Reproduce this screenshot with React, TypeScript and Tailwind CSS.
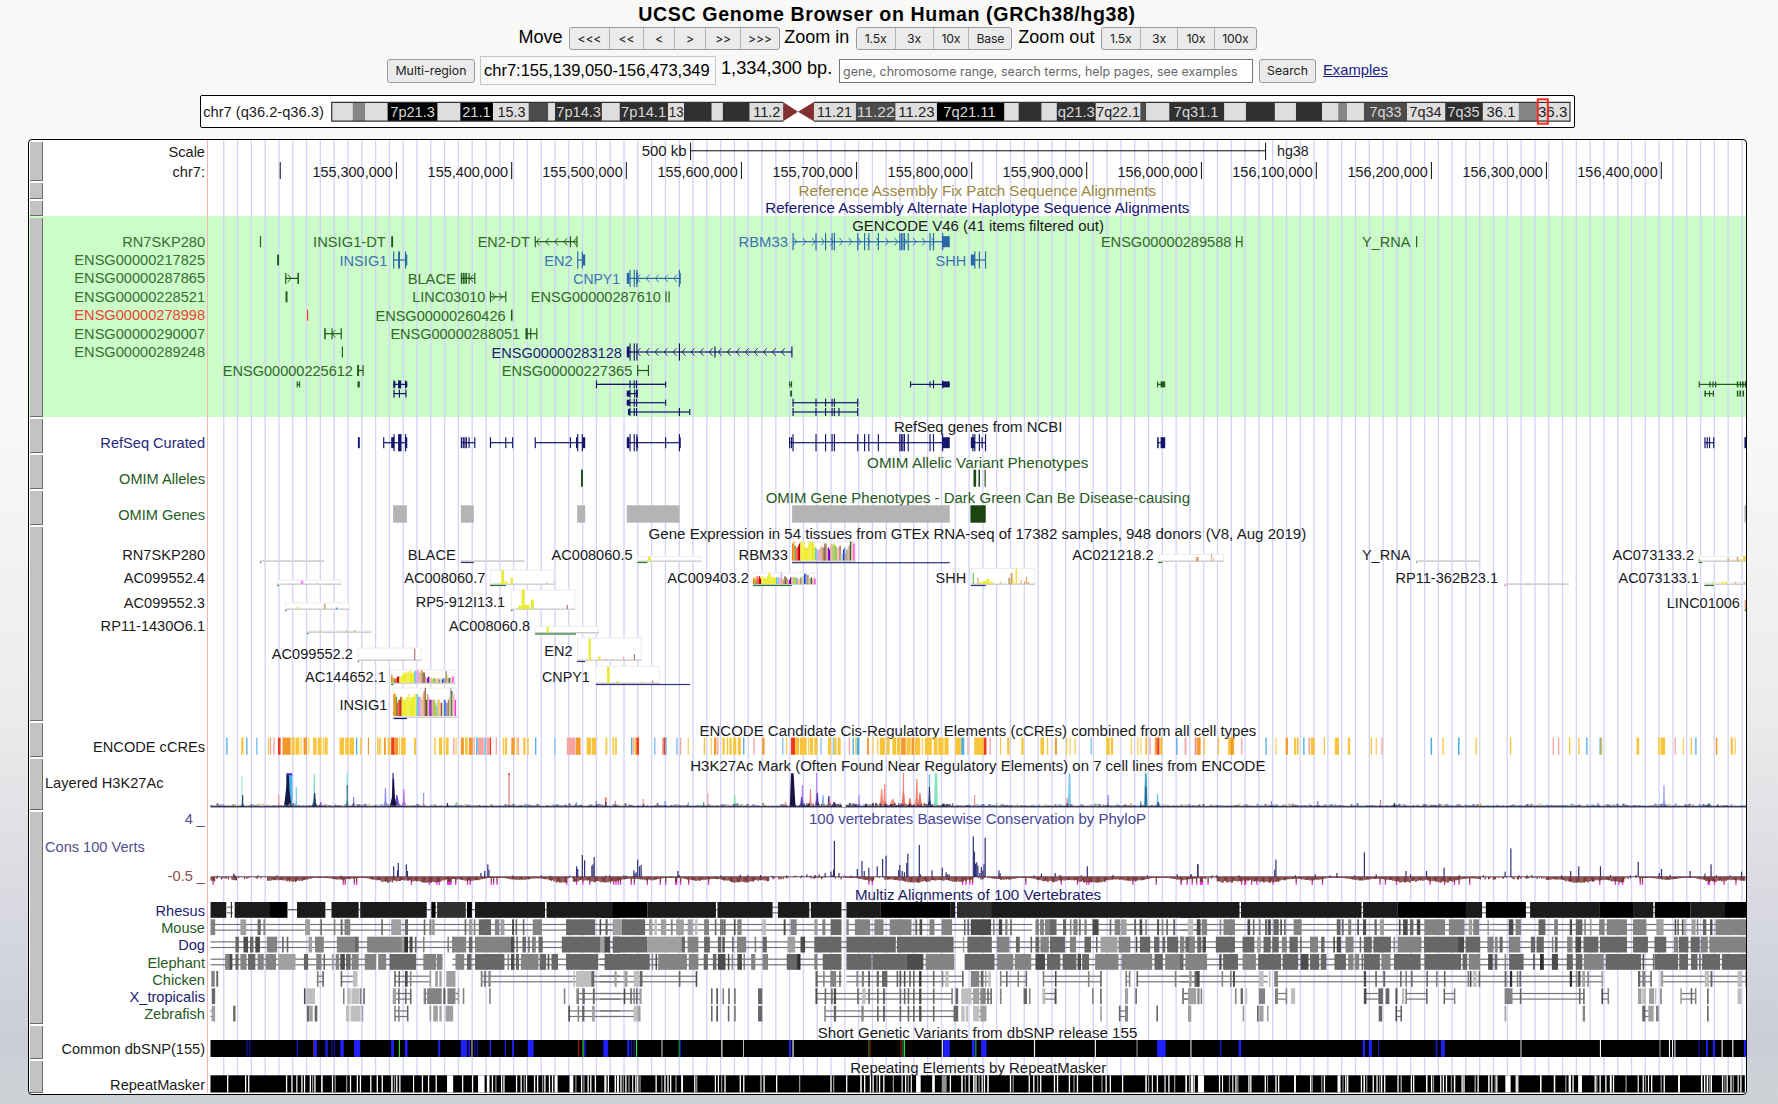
import React from "react";

/* Positions inside the tracks are stored per tile: [page origin, units per pixel]. */
const TILES: [number, number][] = [
  [20, 2.6133],
  [600, 2.6133],
  [1180, 2.6221],
];
const px = (t: number, v: number) => TILES[t][0] + v / TILES[t][1];

type Span = { x: number; w: number; k: string };

/* Parses "12-20a 33b": a range or a single position, then a one-letter colour key. */
function spans(parts: string[], thin = 1.3): Span[] {
  const out: Span[] = [];
  parts.forEach((s, t) => {
    s.split(/\s+/).forEach((tok) => {
      const m = /^(\d+)(?:-(\d+))?([a-z])?$/.exec(tok);
      if (!m) return;
      const x = px(t, +m[1]);
      const w = m[2] ? px(t, +m[2]) - x : thin;
      out.push({ x, w, k: m[3] || "" });
    });
  });
  return out;
}

function rng(seed: number) {
  let s = seed;
  return () => {
    s = (s * 1664525 + 1013904223) % 4294967296;
    return s / 4294967296;
  };
}

const NAVY = "#14146a";
const BLUE = "#2a66a8";
const GREEN = "#1d5a18";
const FONT = "'Liberation Sans', Arial, sans-serif";

function T({ x, e, y, c = "#1a1a1a", s = 15.3, children }: { x: number; e: number; y: number; c?: string; s?: number; children: string }) {
  return (
    <text x={x} y={y} fill={c} fontSize={s} fontFamily={FONT} textLength={e - x} lengthAdjust="spacingAndGlyphs">
      {children}
    </text>
  );
}

/* ---------- Track frame ---------- */

type Label = { t: string; y: number; c?: string; left?: boolean };

function Track({ y, h, labels = [], green = false, children }: { y: number; h: number; labels?: Label[]; green?: boolean; children?: React.ReactNode }) {
  let bottom = y;
  return (
    <div className={green ? "flex bg-[#ccfcc8]" : "flex"} style={{ height: h }}>
      <button className="ml-px mt-[1.5px] mb-[0.5px] w-[13px] shrink-0 border-r border-b border-[#6c6c6c] bg-[#c3c3c3]" aria-label="Configure track" />
      <div className="flex w-[164px] shrink-0 flex-col pl-[2px] pr-[2px] text-[14.6px] leading-4 whitespace-pre">
        {labels.map((l) => {
          const mt = l.y - 8 - bottom;
          bottom = l.y + 8;
          return (
            <div key={l.t} className={l.left ? "text-left" : "text-right"} style={{ marginTop: mt, color: l.c || "#1a1a1a", height: 16 }}>
              {l.t}
            </div>
          );
        })}
      </div>
      <svg className="block shrink-0" width={1539} height={h} viewBox={`207 ${y} 1539 ${h}`}>
        <rect x={207} y={y} width={1} height={h} fill="#f3b3b0" />
        {Array.from({ length: 111 }, (_, i) => (
          <rect key={i} x={223.1 + i * 13.802} y={y} width={1.3} height={h} fill="#d2d2fa" />
        ))}
        {children}
      </svg>
    </div>
  );
}

/* ---------- Genes ---------- */

type GeneProps = { t: number; y: number; c: string; line?: [number, number]; tall?: string; low?: string; arrows?: [number, number, number]; dir?: 1 | -1; hh?: number; lh?: number };

function Gene({ t, y, c, line, tall = "", low = "", arrows, dir = 1, hh = 8.6, lh = 5.5 }: GeneProps) {
  const pad = (s: string) => TILES.map((_, i) => (i === t ? s : ""));
  const a: number[] = [];
  if (arrows) for (let v = arrows[0]; v <= arrows[1]; v += arrows[2]) a.push(px(t, v));
  return (
    <g fill={c}>
      {line && <rect x={px(t, line[0])} y={y - 0.6} width={px(t, line[1]) - px(t, line[0])} height={1.2} />}
      {spans(pad(tall), 1.15).map((s, i) => (
        <rect key={i} x={s.x} y={y - hh} width={s.w} height={hh * 2} />
      ))}
      {spans(pad(low), 1.15).map((s, i) => (
        <rect key={"l" + i} x={s.x} y={y - lh} width={s.w} height={lh * 2} />
      ))}
      {a.map((x, i) => (
        <path key={"a" + i} d={`M${x - 1.6 * dir} ${y - 3.8}L${x + 1.6 * dir} ${y}L${x - 1.6 * dir} ${y + 3.8}`} fill="none" stroke={c} strokeWidth={0.9} />
      ))}
    </g>
  );
}

const R = [241.7, 260, 278.4, 296.8, 315.2, 333.7, 352, 370.5];
const P = [384.4, 393.6, 402.7, 412];

const TEXT_TINT: Record<string, string> = { [GREEN]: "#2c6a26", [BLUE]: "#3a74b0", [NAVY]: "#1c1c74" };
const GENE_NAMES: [string, number, number, number, number, string][] = [
  ["INSIG1-DT", 0, 766, 956, 0, GREEN],
  ["EN2-DT", 0, 1196, 1332, 0, GREEN],
  ["RBM33", 1, 362, 491, 0, BLUE],
  ["ENSG00000289588", 1, 1309, 1650, 0, GREEN],
  ["Y_RNA", 2, 477, 604, 0, GREEN],
  ["INSIG1", 0, 835, 960, 1, BLUE],
  ["EN2", 0, 1370, 1444, 1, BLUE],
  ["SHH", 1, 877, 957, 1, BLUE],
  ["BLACE", 0, 1013, 1139, 2, GREEN],
  ["CNPY1", 0, 1446, 1568, 2, BLUE],
  ["LINC03010", 0, 1025, 1216, 3, GREEN],
  ["ENSG00000287610", 0, 1335, 1675, 3, GREEN],
  ["ENSG00000260426", 0, 929, 1269, 4, GREEN],
  ["ENSG00000288051", 0, 968, 1307, 5, GREEN],
  ["ENSG00000283128", 0, 1232, 1573, 6, NAVY],
  ["ENSG00000225612", 0, 530, 870, 7, GREEN],
  ["ENSG00000227365", 0, 1259, 1600, 7, GREEN],
];

function Gencode() {
  const s = { hh: 4, lh: 3 };
  return (
    <>
      <T x={852.2} e={1104} y={231}>GENCODE V46 (41 items filtered out)</T>
      {GENE_NAMES.map(([n, t, a, b, r, c]) => (
        <T key={n} x={px(t, a)} e={px(t, b)} y={R[r] + 5.5} c={TEXT_TINT[c]}>{n}</T>
      ))}
      <Gene t={0} y={R[0]} c={GREEN} low="627 970-975" />
      <Gene t={0} y={R[0]} c={GREEN} line={[1346, 1456]} low="1345 1437 1454" arrows={[1354, 1450, 24]} dir={-1} />
      <Gene t={1} y={R[0]} c={BLUE} line={[504, 900]} tall="503 563 588 605 611 672 690 701 726 782 786 790 794 804 861 870 894" low="894-914" arrows={[510, 870, 24]} />
      <Gene t={2} y={R[0]} c={GREEN} line={[148, 162]} low="147 161 619" />
      <Gene t={0} y={R[1]} c={GREEN} low="672-677" />
      <Gene t={0} y={R[1]} c={BLUE} line={[976, 1010]} tall="975 988-993 1006" low="1006-1012" />
      <Gene t={0} y={R[1]} c={BLUE} line={[1457, 1475]} tall="1456 1468" low="1470-1477" />
      <Gene t={1} y={R[1]} c={BLUE} line={[970, 1008]} tall="978 990 1006" low="969-979" />
      <Gene t={0} y={R[2]} c={GREEN} line={[694, 728]} low="693 725-729" arrows={[704, 706, 8]} />
      <Gene t={0} y={R[2]} c={GREEN} line={[1153, 1188]} low="1152-1156 1158-1162 1164-1168 1172 1187" arrows={[1180, 1184, 8]} dir={-1} />
      <Gene t={1} y={R[2]} c={BLUE} line={[70, 210]} tall="77 88 95 206" low="70-77 95-99 208" arrows={[101, 200, 24]} dir={-1} />
      <Gene t={0} y={R[3]} c={GREEN} low="694-699" />
      <Gene t={0} y={R[3]} c={GREEN} line={[1229, 1269]} low="1228 1268" arrows={[1238, 1262, 18]} />
      <Gene t={1} y={R[3]} c={GREEN} low="171 179" />
      <Gene t={0} y={R[4]} c="#ef3b2c" low="750" />
      <Gene t={0} y={R[4]} c={GREEN} low="1283-1287" />
      <Gene t={0} y={R[5]} c={GREEN} line={[796, 839]} low="795-799 814 838" arrows={[820, 824, 8]} dir={-1} />
      <Gene t={0} y={R[5]} c={GREEN} line={[1322, 1350]} low="1321-1327 1333 1349" />
      <Gene t={0} y={R[6]} c={GREEN} low="841" />
      <Gene t={1} y={R[6]} c={NAVY} line={[70, 502]} tall="77 88 95 206" low="70-77 299 500" arrows={[101, 490, 23.6]} dir={-1} />
      <Gene t={0} y={R[7]} c={GREEN} line={[882, 897]} low="881-886 895" />
      <Gene t={1} y={R[7]} c={GREEN} line={[97, 126]} low="97 125" />
      <Gene t={0} y={P[0]} c={GREEN} line={[724, 731]} low="723-726 729-732 882-888" {...s} />
      <Gene t={0} y={P[0]} c={NAVY} line={[976, 1012]} tall="976 988-996 1006-1009" low="976-981 1008-1012" {...s} />
      <Gene t={0} y={P[1]} c={NAVY} line={[976, 1009]} tall="976 990 1007" {...s} />
      <Gene t={0} y={P[0]} c={NAVY} line={[1506, 1686]} tall="1505" {...s} />
      <Gene t={1} y={P[0]} c={NAVY} line={[0, 171]} tall="77 88 94" low="170" {...s} />
      <Gene t={1} y={P[1]} c={NAVY} line={[70, 99]} tall="77 89 94-99" low="70-78" {...s} />
      <Gene t={1} y={P[2]} c={NAVY} line={[70, 171]} tall="77 88 94" low="70-78 170" {...s} />
      <Gene t={1} y={P[3]} c={NAVY} line={[74, 235]} tall="77 88 94 206" low="73-78 233" {...s} />
      <Gene t={1} y={P[0]} c={GREEN} line={[495, 501]} low="494 499" {...s} />
      <Gene t={1} y={P[1]} c={GREEN} low="497-502" {...s} />
      <Gene t={1} y={P[2]} c={NAVY} line={[504, 673]} tall="503 563 588 605 611 672" {...s} />
      <Gene t={1} y={P[3]} c={NAVY} line={[504, 673]} tall="503 563 588 605 611 623 672" {...s} />
      <Gene t={1} y={P[0]} c={NAVY} line={[811, 914]} tall="870 894" low="810 861 894-914" {...s} />
      <Gene t={1} y={P[0]} c={GREEN} line={[1457, 1476]} low="1456 1465-1477" {...s} />
      <Gene t={2} y={P[0]} c={GREEN} line={[1361, 1484]} low="1360 1388 1396 1403 1460-1464 1468-1471 1474-1478 1481-1485" {...s} />
      <Gene t={2} y={P[1]} c={GREEN} line={[1376, 1398]} low="1375-1379 1387 1397 1460-1464 1467-1471 1475-1479" {...s} />
    </>
  );
}

/* ---------- GTEx ---------- */

const TISSUES = "#ff6600 #ffaa00 #33aa33 #ff5555 #dd6655 #ff0000 #aa0000 #eded30 #eded30 #eded30 #eded30 #eded30 #eded30 #eded30 #eded30 #eded30 #eded30 #eded30 #eded30 #eded30 #33cccc #88bbee #ee88ff #f0b8b0 #ccaadd #eebb77 #cc9955 #8b7355 #6a4420 #bb9988 #e8b8a8 #9900ff #660099 #d8b090 #e0b090 #aabb66 #99ee22 #99bb88 #aaaaff #ffd700 #ffaaff #995522 #aaff99 #d8c8c0 #1144ff #5577ff #cc9977 #778855 #f0c890 #cc9999 #117733 #eebbaa #ffbbbb #ff33dd".split(" ");

const DENSE: { t: number; x: number; base: number; h: number; v: string }[] = [
  { t: 0, x: 976, base: 716, h: 28, v: "776455665556675666777666578957655555435544355445698775566555667555756665565566" },
  { t: 0, x: 970, base: 682.7, h: 13, v: "533234444576777887678899789774334332332332232338533344347435663333773323333" },
  { t: 1, x: 502, base: 560.5, h: 19, v: "897667899796668999866555676688665887876667335635679998856657779777967788776655" },
  { t: 1, x: 400, base: 584, h: 11.5, v: "4536464655446896555555549436543355555543456688775453546776535887778643" },
];

type Box = { t: number; x: number; top: number; base: number; g: [number, number, string] | null; bars?: [number, number, string, number?][] };
const G = "#2b7a2b";
const N = "#30307c";
const Y = "#eaea38";
const BOXES: Box[] = [
  { t: 0, x: 628, top: 560.5, base: 561, g: [627, 630, G] },
  { t: 0, x: 673, top: 580, base: 584, g: [672, 676, G], bars: [[734, 10, "#ee88ff", 6], [775, 4, "#e8a090"]] },
  { t: 0, x: 694, top: 603, base: 609, g: [693, 697, G], bars: [[723, 5, "#eedd55", 6], [794, 16, "#d8b090", 5], [825, 4, "#4488ff", 5]] },
  { t: 0, x: 751, top: 631, base: 632, g: [750, 754, G], bars: [[783, 4, "#eedd55", 5], [852, 4, "#ddb050"], [873, 5, "#ddb050"]] },
  { t: 0, x: 883, top: 648, base: 660, g: [883, 886, G], bars: [[1030, 34, "#b07070"]] },
  { t: 0, x: 970, top: 670, base: 683, g: [970, 976, G] },
  { t: 0, x: 976, top: 688, base: 717, g: [976, 1011, NAVY] },
  { t: 0, x: 1152, top: 560.5, base: 561, g: [1152, 1186, N] },
  { t: 0, x: 1229, top: 570, base: 584, g: [1228, 1270, G], bars: [[1258, 42, Y, 7], [1252, 6, Y], [1266, 8, Y, 8], [1282, 19, Y, 6], [1375, 4, "#e0a0a0"]] },
  { t: 0, x: 1284, top: 590, base: 609, g: [1283, 1287, G], bars: [[1302, 10, Y, 10], [1311, 58, Y, 8], [1319, 13, Y, 12], [1335, 28, Y, 8], [1429, 12, "#b07070"]] },
  { t: 0, x: 1346, top: 626.5, base: 632.5, g: [1346, 1453, G], bars: [[1376, 17, Y, 6]] },
  { t: 0, x: 1457, top: 638, base: 660, g: [1456, 1477, N], bars: [[1486, 64, Y, 6], [1511, 11, Y, 6], [1530, 4, "#f0a0a0"], [1547, 4, "#f0a0a0"], [1576, 10, "#f0a0a0"], [1604, 18, "#b07070"]] },
  { t: 0, x: 1505, top: 666.5, base: 683, g: [1505, 1751, N], bars: [[1534, 48, Y, 7], [1558, 6, Y, 6], [1624, 5, "#dddd66"], [1652, 8, "#c08080"]] },
  { t: 1, x: 98, top: 556.5, base: 561, g: [97, 124, G], bars: [[125, 13, Y, 8]] },
  { t: 1, x: 502, top: 542, base: 561.2, g: [502, 914, N] },
  { t: 1, x: 400, top: 573, base: 584, g: [400, 502, G] },
  { t: 1, x: 970, top: 568.5, base: 584, g: [969, 1008, N], bars: [[974, 34, "#55cc55"], [986, 20, "#d8a878"], [991, 5, Y, 7], [999, 9, Y, 10], [1010, 15, Y, 8], [1019, 6, Y, 8], [1046, 8, "#e8c090"], [1067, 18, "#c8a070", 5], [1073, 33, "#c8a070", 5], [1078, 18, Y], [1086, 46, "#f8d840", 4], [1099, 12, "#e8b090"], [1108, 8, "#e0a060"], [1113, 22, "#e0a060"], [1118, 6, "#e0a060"]] },
  { t: 1, x: 1459, top: 554.5, base: 561, g: [1458, 1470, G], bars: [[1464, 12, "#88dd88", 5], [1558, 12, "#d8a070", 6]] },
  { t: 2, x: -53, top: 554.5, base: 561, g: null, bars: [[42, 12, "#d8a070", 7], [81, 21, "#e0b090"], [86, 8, "#f0d0b0", 5]] },
  { t: 2, x: 619, top: 560.5, base: 561, g: [619, 621, G] },
  { t: 2, x: 852, top: 583.5, base: 584, g: [850, 855, "#ee77ee"] },
  { t: 2, x: 1360, top: 556.5, base: 561, g: [1360, 1369, G], bars: [[1360, 6, "#f0a060"], [1435, 10, "#e0b080", 5], [1450, 4, "#ddaa66"], [1460, 12, "#d8a070", 4], [1468, 6, Y, 6], [1477, 15, "#eecc33", 6]] },
  { t: 2, x: 1376, top: 582, base: 584, g: [1375, 1400, G], bars: [[1396, 6, Y], [1420, 6, Y, 5], [1429, 6, Y, 5], [1454, 6, "#ddaa66"], [1478, 6, "#ddaa66"]] },
];

const GTEX_NAMES: [string, number, number, number, number][] = [
  ["BLACE", 0, 1013, 1139, 559.9],
  ["AC008060.5", 0, 1389, 1601, 559.9],
  ["RBM33", 1, 362, 491, 559.9],
  ["AC021218.2", 1, 1234, 1447, 559.9],
  ["Y_RNA", 2, 477, 604, 559.9],
  ["AC073133.2", 2, 1134, 1348, 559.9],
  ["AC008060.7", 0, 1004, 1216, 583.2],
  ["AC009403.2", 1, 176, 389, 583.2],
  ["SHH", 1, 877, 957, 583.2],
  ["RP11-362B23.1", 2, 565, 834, 583.2],
  ["AC073133.1", 2, 1150, 1360, 583.2],
  ["RP5-912I13.1", 0, 1034, 1268, 607.2],
  ["LINC01006", 2, 1276, 1468, 608.2],
  ["AC008060.8", 0, 1121, 1333, 631.4],
  ["AC099552.2", 0, 658, 870, 658.8],
  ["EN2", 0, 1370, 1444, 656.4],
  ["AC144652.1", 0, 745, 956, 681.8],
  ["CNPY1", 0, 1364, 1489, 681.8],
  ["INSIG1", 0, 835, 960, 710.3],
];

function Gtex() {
  return (
    <>
      <T x={648.6} e={1306.2} y={539}>Gene Expression in 54 tissues from GTEx RNA-seq of 17382 samples, 948 donors (V8, Aug 2019)</T>
      {GTEX_NAMES.map(([n, t, a, b, y]) => (
        <T key={n} x={px(t, a)} e={px(t, b)} y={y}>{n}</T>
      ))}
      {BOXES.map((b, i) => {
        const x = px(b.t, b.x);
        return (
          <g key={i}>
            <rect x={x} y={b.top} width={63.5} height={b.base - b.top + 0.5} fill="#fff" stroke="#ececec" strokeWidth={1} />
            <rect x={x} y={b.base - 0.5} width={63.8} height={1.3} fill="#cbcbcb" />
            {b.bars?.map(([v, h, c, w], j) => (
              <rect key={j} x={px(b.t, v)} y={b.base - h / 3} width={(w || 3) / 2.6} height={h / 3} fill={c} />
            ))}
            {b.g && <rect x={px(b.t, b.g[0])} y={b.base + 0.9} width={px(b.t, b.g[1]) - px(b.t, b.g[0])} height={1.2} fill={b.g[2]} />}
          </g>
        );
      })}
      {DENSE.map((d, i) =>
        TISSUES.map((c, j) => {
          const h = ((+d.v[j] + 0.5) / 9.5) * d.h;
          return <rect key={i + "-" + j} x={px(d.t, d.x) + j * 1.155} y={d.base - h} width={1.3} height={h} fill={c} />;
        })
      )}
      <rect x={1744.6} y={600} width={1.4} height={9} fill="#f0a070" />
      <rect x={1744.6} y={609.5} width={1.4} height={1.5} fill={G} />
    </>
  );
}

/* ---------- Coloured tick tracks ---------- */

const CCRE_COLORS: Record<string, string> = { y: "#f8c43a", l: "#fad060", o: "#f5982c", r: "#f03a1e", p: "#f6a4a0", b: "#4aaee0", c: "#84c4f0" };
const CCRES = spans(
  [
    "538-543c 578-584y 591b 617-621c 648-651y 653p 662p 674-681r 686-707o 709y 713-718y 720-730y 733l 741-750o 753l 766-775y 778-788y 791l 796-804y 835-847y 850-859y 861-873y 878b 889-893y 909-912o 933-936y 937y 941l 951-956o 961y 965y 970-979r 979-988o 990l 996-1008y 1030-1035y 1083y 1095-1103y 1107y 1113-1120y 1132p 1138l 1152-1160o 1163-1170y 1173-1183o 1185p 1192-1196b 1197-1212p 1213-1218c 1219-1226p 1227-1231r 1243p 1262-1265y 1267-1273y 1284-1293o 1297y 1301p 1315-1321y 1326y 1346b 1396c 1429-1452p 1453-1465o 1481-1492y 1494-1505y 1530-1534y 1548-1552y 1556l",
    "16l 34l 40y 81b 85p 90-95y 95-102r 141-145c 162-166p 166-171r 171-174b 199-203c 209p 229l 271-275y 289l 298-304o 306p 320-326y 331-335y 338-344y 348-356y 360-368y 374b 401p 424-430o 476c 486l 499-510r 510-520y 522-540y 543l 548-557y 560-568y 576c 596-604y 608c 612-618y 621-629y 650p 660b 667y 671-678b 698-703o 712l 724l 731-745y 749-757y 764-774y 776-785y 787-799o 801-812y 814-821o 823-837y 841l 849-867y 872-882y 884-898y 900-911y 928-943y 944-952b 960p 978-1003y 1003-1010r 1018p 1045y 1064-1070y 1101-1107y 1151-1160y 1168y 1189-1194o 1218l 1227l 1240l 1282c 1323-1332y 1335-1341y 1387l 1404l 1412l 1425-1430y 1436p 1450-1456o 1456-1462r 1464-1470y 1506b 1529p 1555r 1562-1568y",
    "12p 38p 45-54o 62y 99y 126-142y 133-140o 160p 224b 250l 277-283o 299-304y 306-311y 323b 337-341p 343-353y 377y 406-417y 440-446y 500y 513l 528p 657-661b 688y 729-733b 775y 865y 977p 991p 1020y 1044y 1065b 1100-1104b 1103-1107y 1197-1204y 1253-1260l 1261-1272y 1297p 1318l 1339y 1350-1355c 1405-1409o 1444-1450y 1454l",
  ],
  1.3
);

const SNP_COLORS: Record<string, string> = { b: "#2020ff", n: "#1818b8", w: "#f4f4ff", x: "#8c8c94", g: "#30e030", h: "#207a30", r: "#8c1c14" };
const SNPS = spans(
  [
    "592n 599n 723-727n 766r 768-776b 797-805n 814n 820n 837-846b 873-889b 970-977b 990-993g 1006-1013b 1093-1098b 1152-1168b 1172-1176b 1179-1183x 1188n 1194n 1227-1231b 1267-1270b 1286-1291b 1327-1342b 1458-1462r 1470-1473g 1474-1479n 1525-1537b",
    "9-21b 71-77b 81n 88n 94-97g 160-164x 205-209h 209n 317-320w 374-376w 494-499b 503-506w 701-704h 704-707r 785-788r 790-793h 794-797g 893-896w 897-914b 972-979b 980-984h 996-1010b 1134-1137w 1293-1296w 1402-1405x 1456-1478b 1542-1546x",
    "27-30x 105-109n 154-160b 479-485b 495-503b 519n 670-675n 684-694b 892-896x 1101-1104w 1257-1260x 1282-1285w 1290w 1295-1300x 1360n 1379-1384b 1397-1403b 1420-1423w 1448-1451w 1479-1485b",
  ],
  1
);

const GAPS = spans(
  [
    "541 588 596 695 709 722-725 735 742 757 763x 769 787-791 815 822x 852x 862 880 888 915 932 945 970-974 977x 983 991 1027-1030 1050 1066 1086 1116-1132 1155 1181 1197-1214 1220-1227 1233 1242x 1257 1263 1296 1308 1316x 1322 1343 1351 1364x 1370 1382 1390 1397-1405 1436-1446 1451x 1466 1472x 1483 1490 1502 1527-1531 1536 1560",
    "14-17 38-42 46 53 59x 66 74x 84-87 92 97 103x 145 160-163x 168 176 183 197x 212-217 246 251x 300-303 308-311 316x 325 365 374 418-423x 427 460 520x 602 609x 643 680-684 690 705 712 722x 729 740 765x 788-791 797 804x 812-815 826-838 868-875 893-906x 914 944-948 953x 963 975-979 981 989x 997 1003 1012-1016 1071 1078x 1120 1132 1142x 1150 1186 1194 1225 1237x 1246 1286-1289 1310x 1321 1332 1364 1425-1429 1432x 1442-1445 1455 1475-1478 1485 1500x 1530 1543x 1551",
    "15-18 23x 29-34 47-63 102 110-113 128x 137-140 145 150x 179 184 222 228-231x 250 257 299-304 341 345x 370x 377 413-421 426-429x 433 438 474 481-485 488x 505 515 522x 527 535 570 578-582x 605 611 645-649 658 663x 682 689 697 710x 718-722 738 743 772-776x 780 808-812 816 825x 829 853-867 880 884 944-948 980-984 1010x 1019-1025 1029 1044-1054 1087 1091x 1100 1115 1127-1132 1135 1168x 1200-1203 1213 1219x 1227-1230 1235 1260x 1268 1306-1311 1366-1370 1374 1381 1386x 1391-1395 1421 1427x 1433 1443 1449x 1462-1465 1469 1481",
  ],
  1.3
);

function Ticks({ list, y, h, colors, fallback }: { list: Span[]; y: number; h: number; colors: Record<string, string>; fallback: string }) {
  return (
    <>
      {list.map((s, i) => (
        <rect key={i} x={s.x} y={y} width={s.w} height={h} fill={colors[s.k] || fallback} />
      ))}
    </>
  );
}

/* ---------- Layered H3K27Ac ---------- */

/* tile, position, height, half width, colour */
const PEAKS: [number, number, number, number, string][] = [
  [0, 580, 31, 3, "#8fe8c8"], [0, 582, 12, 4, "#30306c"], [0, 676, 12, 4, "#f09090"], [0, 722, 20, 4, "#70c8e8"], [0, 769, 33, 6, "#80e0c0"], [0, 770, 14, 8, "#303060"], [0, 786, 5, 8, "#9060c0"],
  [0, 855, 34, 4, "#80e0c0"], [0, 855, 22, 3, "#406080"], [0, 872, 10, 5, "#8080f0"], [0, 955, 19, 6, "#8888f4"], [0, 985, 12, 14, "#7050d0"], [0, 1003, 18, 7, "#b070e0"], [0, 975, 34, 8, "#3030a0"], [0, 976, 28, 10, "#181040"],
  [0, 1055, 14, 3, "#8080f0"], [0, 1140, 5, 6, "#70d0a0"], [0, 1117, 4, 5, "#303060"], [0, 1454, 5, 6, "#70b0d0"], [0, 1506, 6, 3, "#6060e0"], [0, 1531, 10, 4, "#f07070"], [0, 1556, 6, 5, "#f08080"],
  [1, 15, 9, 4, "#f06060"], [1, 15, 5, 5, "#403050"], [1, 40, 5, 5, "#f09080"], [1, 113, 8, 4, "#f09090"], [1, 170, 6, 3, "#6070e0"], [1, 231, 5, 4, "#70d0b0"], [1, 271, 5, 6, "#40b080"], [1, 282, 14, 4, "#f0a0a0"], [1, 352, 12, 5, "#70e0a0"], [1, 426, 4, 4, "#555"],
  [1, 485, 5, 8, "#f09090"], [1, 507, 10, 8, "#5040b0"], [1, 529, 22, 6, "#b080f0"], [1, 527, 10, 10, "#6040c0"], [1, 550, 18, 6, "#f08080"], [1, 566, 34, 5, "#c088f0"], [1, 568, 14, 8, "#4030a0"], [1, 583, 12, 8, "#80b0f0"], [1, 598, 11, 7, "#403070"], [1, 600, 6, 10, "#f07070"], [1, 612, 5, 14, "#503070"],
  [1, 677, 12, 5, "#b080f0"], [1, 736, 18, 10, "#f08878"], [1, 744, 23, 7, "#f08878"], [1, 765, 8, 20, "#f09080"], [1, 793, 34, 5, "#f08878"], [1, 793, 16, 10, "#f07060"], [1, 810, 9, 10, "#f07060"], [1, 828, 28, 8, "#f08878"], [1, 836, 14, 10, "#f07060"], [1, 861, 33, 5, "#60b8e8"], [1, 861, 20, 6, "#303868"],
  [1, 979, 12, 4, "#f09090"], [1, 1036, 4, 3, "#60c090"], [1, 1221, 9, 6, "#f09080"], [1, 1328, 12, 5, "#9080e0"], [1, 1387, 4, 4, "#f0a040"], [1, 1413, 6, 5, "#50a0b0"], [1, 1457, 13, 5, "#60b8e8"], [1, 1459, 5, 7, "#305080"],
  [2, 240, 6, 4, "#8080f0"], [2, 253, 3, 10, "#50a0a0"], [2, 297, 4, 4, "#f08080"], [2, 361, 6, 6, "#9080e0"], [2, 526, 7, 3, "#f07070"], [2, 562, 4, 5, "#444"], [2, 788, 4, 4, "#f0b050"], [2, 942, 4, 4, "#f0c060"], [2, 1096, 4, 8, "#8090e0"], [2, 1269, 22, 5, "#9898f8"], [2, 1387, 4, 10, "#60b0a0"], [2, 1411, 3, 5, "#8080f0"],
];

function H3K27Ac() {
  const r = rng(7);
  const cols = ["#30305a", "#c0a050", "#5070a0", "#503050", "#30305a", "#508070"];
  const noise = Array.from({ length: 769 }, (_, i) => ({ x: 210.5 + i * 2, h: 1 + r() * r() * 2.4, c: cols[Math.floor(r() * 6)] }));
  const extra = Array.from({ length: 130 }, () => ({ x: 800 + r() * 152, h: 1.5 + r() * 2.5 }));
  const base = 807;
  return (
    <>
      <T x={690.3} e={1265.4} y={770.7}>H3K27Ac Mark (Often Found Near Regulatory Elements) on 7 cell lines from ENCODE</T>
      {PEAKS.map(([t, v, h, w, c], i) => (
        <path key={i} d={`M${px(t, v - w)} ${base}L${px(t, v - w / 2.6)} ${base - h * 0.3}L${px(t, v - 1.5)} ${base - h}H${px(t, v + 1.5)}L${px(t, v + w / 2.6)} ${base - h * 0.3}L${px(t, v + w)} ${base}Z`} fill={c} />
      ))}
      {extra.map((n, i) => (
        <rect key={i} x={n.x} y={base - n.h} width={1.4} height={n.h} fill="#382850" opacity={0.7} />
      ))}
      <path d={`M285.5 ${base}L286.5 773.5H292.2L292.6 ${base}Z`} fill="#4cb4e8" />
      <path d={`M284 ${base}L286.5 785L286.5 773.5H288.8L289.5 790L291.5 ${base}Z`} fill="#181848" />
      <rect x={286.5} y={773.3} width={5.7} height={2} fill="#5030e0" />
      <path d={`M789.8 ${base}L791 773.3H793.6L795.5 ${base}Z`} fill="#1c1040" />
      <rect x={508.2} y={773.3} width={1.8} height={33.7} fill="#f4a4a8" />
      <rect x={508.2} y={773.3} width={1.8} height={2} fill="#f05050" />
      <path d={`M934 ${base}L934.8 773.3H937.2L937.8 ${base}Z`} fill="#80e4c0" />
      <path d={`M1067.8 ${base}L1068.6 773.3H1070.4L1071 ${base}Z`} fill="#80c8f4" />
      <path d={`M1144 ${base}L1145 773.3H1146.7L1147.6 ${base}Z`} fill="#3aa8c8" />
      <rect x={1145.2} y={787} width={1.4} height={20} fill="#285878" />
      {noise.map((n, i) => (
        <rect key={i} x={n.x} y={base - n.h - 0.4} width={2} height={n.h} fill={n.c} opacity={0.75} />
      ))}
      <rect x={210.5} y={806.2} width={1535.5} height={1.2} fill="#202048" />
      <rect x={842} y={800} width={3.5} height={7} fill="#fff" />
    </>
  );
}

/* ---------- Conservation ---------- */

const POS: [number, string][] = [
  [0, "515:4 558:10 561:6 622:5 671:5 838:4 976:32 986:20 988:42 1009:38 1012:18 1204:12 1214:18 1222:38 1225:22 1287:4 1362:5 1385:4 1436:4 1454:32 1457:24 1469:66 1475:50 1494:34 1497:38 1500:60 1530:4 1540:5"],
  [1, "62:5 68:4 88:20 91:10 94:14 98:52 103:32 107:36 203:18 206:6 315:5 366:7 386:5 419:6 450:4 487:5 510:4 527:5 540:8 549:4 562:6 572:8 588:12 603:16 606:6 610:22 612:108 624:12 640:4 656:4 672:24 684:48 690:18 702:28 724:32 738:54 747:64 780:20 783:36 789:18 795:14 801:42 804:70 834:96 837:8 867:20 894:28 904:14 907:8 912:8 975:122 978:76 981:40 984:44 987:34 992:12 996:30 1000:20 1003:38 1006:118 1042:20 1045:12 1134:5 1153:10 1189:12 1202:6 1257:5 1273:32 1340:6 1430:5 1508:8 1544:8 1562:38"],
  [2, "28:8 46:38 84:5 96:5 154:5 248:22 251:52 302:5 354:8 393:5 411:12 458:5 483:74 514:8 592:18 604:8 646:18 692:28 732:5 795:5 852:16 867:86 888:5 910:5 922:5 1000:5 1024:18 1045:32 1102:32 1128:6 1180:5 1195:6 1201:46 1256:12 1262:24 1285:6 1337:18 1376:10 1392:38 1406:5 1442:5 1472:16"],
];

const DIPS = spans([
  "503 843 848 872 878 1021 1068 1088 1094 1116-1128 1137 1168 1175 1230 1236 1245 1427 1453 1469 1487",
  "34 40 46 52 80 88 122 156 170 196-202 209 230 282 701 710 946 955 965 972 1111 1204 1246 1270 1276 1391 1452 1517 1546",
  "2 17 42 52-60 72 160 168-174 186 200 242 303 345 372 523 537 566 654 692 718 730 758 1099 1140 1149 1159 1205 1211 1383-1390 1400 1425 1456",
]);

/* Quiet stretches where the score stays around zero. */
const QUIET: [number, number][] = [[214, 232], [236, 266], [566, 572], [768, 812], [815, 845], [874, 884], [973, 986], [1205, 1216], [1480, 1492], [1496, 1545], [1624, 1640]];

function Conservation() {
  const r = rng(31);
  const neg: { x: number; h: number }[] = [];
  for (let i = 0; i < 1330; i++) {
    const x = 210.5 + i * 1.154;
    const quiet = QUIET.some(([a, b]) => x > a && x < b);
    if (quiet && r() < 0.65) continue;
    const env = Math.max(0, 0.55 + 0.45 * Math.sin(i / 23) + 0.35 * Math.sin(i / 6.1 + 2));
    neg.push({ x, h: quiet ? 0.5 + r() * 2 : Math.min(5.6, 1 + 2.6 * env + r() * 2 * env) });
  }
  return (
    <g>
      <rect x={210.5} y={876.3} width={1535.5} height={1} fill="#6a4058" />
      {neg.map((n, i) => (
        <rect key={i} x={n.x} y={877} width={1.25} height={n.h} fill="#7c3a3a" />
      ))}
      {DIPS.map((d) => (
        <g key={d.x}>
          <rect x={d.x} y={877} width={d.w} height={5.4} fill="#7c3a3a" />
          <rect x={d.x} y={882} width={d.w} height={2.9} fill="#f030f0" />
        </g>
      ))}
      {POS.map(([t, s]) =>
        s.split(" ").map((p) => {
          const [v, h] = p.split(":").map(Number);
          return <rect key={t + "-" + v} x={px(t, v) - 0.4} y={877 - h / 3} width={1.2} height={h / 3} fill="#303078" />;
        })
      )}
    </g>
  );
}

/* ---------- Multiz ---------- */

const SHADES: Record<string, string> = { k: "#000", j: "#1b1b1b", i: "#303030", h: "#4c4c4c", g: "#676767", f: "#838383", e: "#a0a0a0", d: "#bfbfbf" };

const SPECIES: { n: string; c: string; y: number; lines: string[]; blocks: string[] }[] = [
  {
    n: "Rhesus", c: "#1c1c70", y: 902, lines: ["541-556 1074-1090", "451-465 927-934", "155-162 475-480 790-803 905-919 1240-1246"],
    blocks: [
      "498-539j 551-554i 561-651j 651-699k 724-798j 814-885j 889-1063j 1075-1086k 1090-1165i 1168-1181k 1189-1372j 1376-1550j 1550-1568k",
      "0-33j 33-124k 124-303j 307-451j 465-547j 551-631j 644-734j 734-915k 915-928j 933-1022i 1022-1568j",
      "0-156j 160-476j 480-571j 571-750k 750-792j 802-907k 918-1101j 1101-1190k 1190-1241j 1245-1338k 1338-1429j 1429-1485k",
    ],
  },
  {
    n: "Mouse", c: "#245a1e", y: 919.3, lines: ["498-1568", "0-631 644-1130 1138-1568", "0-1485"],
    blocks: [
      "498-510f 576-591e 621-629g 636-641f 745-758e 785-789g 820f 838-843g 848-863f 944g 970-996e 1006-1014g 1055g 1070f 1075-1084e 1162g 1173-1182e 1186f 1199-1231g 1241-1252f 1256-1266e 1286-1291h 1295g 1314g 1340-1364f 1427-1503g 1514f 1530g 1550-1568e",
      "0-3h 17-20g 33-57e 57-118g 128-137e 142-149d 159-173e 185-190f 199-219e 229-242e 248-255d 272-285f 300g 314g 319g 324g 350h 359-370f 424-434d 480-485h 498-514f 560-568e 581-589f 603-631g 644-650f 666-706f 717-741f 757-814f 824-829g 835-842h 861-874f 893-920f 951g 960g 969-1022h 1027f 1042-1051h 1059-1065f 1072g 1138-1147f 1150-1160f 1163-1174f 1174-1193g 1210-1218g 1228f 1237-1248f 1252g 1266-1272f 1287-1303h 1332g 1345-1359f 1361-1376e 1396-1401g 1410-1417h 1425f 1456-1461h 1468f 1480g 1498-1503g 1536-1550d 1560-1568f",
      "22-34d 44-54h 57-71f 104f 114-144f 177-184h 191g 207f 223-229g 231-238h 245-259g 263h 273g 298-319f 411-421g 425g 441-449f 465h 480-488h 510-516g 524-535e 574h 585-597h 603-612g 621-630h 641-695f 705-746f 757-766e 769-784f 806e 862-874h 880-894f 940-958g 981-991f 1022-1028h 1038-1055g 1060f 1075e 1099-1113f 1119-1172f 1188-1223f 1249-1268e 1297h 1304g 1316h 1322e 1341-1352e 1355f 1371-1380g 1390-1396h 1404-1485f",
    ],
  },
  {
    n: "Dog", c: "#1c1c70", y: 936.7, lines: ["498-1568", "0-1568", "0-1485"],
    blocks: [
      "563-572g 584-596h 601-610g 615-627h 645-672f 685g 697g 754-763e 771-794f 828-874f 874-885g 907-998f 998-1004e 1004-1014i 1018-1026h 1032g 1053f 1117f 1129-1166f 1173-1182g 1189-1282f 1282-1292h 1297g 1313-1322g 1328g 1338-1348f 1355-1366g 1416-1516g 1527g 1537-1542f 1550-1568h",
      "0-12e 12-26h 33-124g 124-213e 213-222g 229-257f 272-287g 308-317g 320-326h 345g 358-382f 404f 425-436g 490-510e 524-536h 560-631g 644-773g 776-924g 948e 960-1024g 1037-1070f 1087-1097g 1125g 1138-1148g 1151-1173f 1176-1215g 1228-1244f 1266-1283g 1296g 1308-1352e 1355-1386f 1400h 1411-1438g 1448-1462g 1470-1477g 1482-1511g 1516-1527f 1530-1554g 1560-1568e",
      "0-10f 24-38f 46-56g 59-68h 94-144g 164-195g 202-212e 219-238g 242-259g 267-280f 287-309g 315g 341-362f 370-379g 402h 411-422h 434-455f 471g 482-503g 507-553g 560f 571-633f 640-729g 729-745h 749-787g 806-822f 826-833f 838-846g 862-892f 920-931g 935-954g 975f 983-990g 1015-1029f 1037-1052h 1058-1097g 1101-1172g 1188-1227g 1244-1275g 1295-1306f 1308-1333g 1339-1363g 1366-1384f 1388-1485f",
    ],
  },
  {
    n: "Elephant", c: "#245a1e", y: 954, lines: ["498-930 938-1104 1130-1568", "0-631 644-926 953-1568", "0-1485"],
    blocks: [
      "536-552f 548-555h 563-571g 576-592f 596-615g 621-637f 642-669f 675-720e 742-753g 774-788f 793g 815-820e 825-834f 837-849h 852-864g 867-885f 901-931f 936-957f 966-1035g 1054-1087f 1089-1104f 1138-1161f 1168-1180g 1189-1266g 1274f 1283-1292h 1296-1304g 1309-1355f 1358-1375g 1379h 1389-1406g 1427-1511g 1530-1568g",
      "12-130g 135f 145h 152-227f 232-257f 271-282g 295-304g 308-328h 334h 344f 359-371h 375f 395-406f 425-439f 488-515g 515-524i 560-568f 582-631g 644-710g 712-802g 802-845h 851-926f 953-1031g 1038-1080f 1084-1127f 1138-1163h 1168-1203g 1209-1245g 1248-1257h 1260-1278g 1294-1355f 1363-1443f 1449-1471g 1477-1525f 1530-1568f",
      "0-8g 15-71f 103-109h 113-152g 164-199f 205-265g 269-310g 316-337h 341-365g 369-384g 405-435g 441-455f 458-470f 476g 482-524g 528-552f 561-631g 641-737g 741-753g 757-787f 808-820h 825-832g 851f 863-901g 926h 944-954i 975-991h 1014-1030g 1038-1055g 1059-1111f 1116-1209g 1213h 1240g 1245-1306g 1309-1332g 1340-1357g 1361g 1369-1416g 1421-1485g",
    ],
  },
  {
    n: "Chicken", c: "#245a1e", y: 971, lines: ["775-793 838-870 978-1072 1205-1568", "0-252 565-632 644-948 970-1022 1046-1115 1157-1310 1373-1385 1402-1568", "0-230 250-895 890-1110 1203-1236 1263-1485"],
    blocks: [
      "500-509f 513-518g 776f 790g 838g 870-882d 978g 989g 1006-1013h 1019f 1070e 1085-1092e 1096-1102e 1114-1138e 1204-1209f 1213g 1224-1230f 1446d 1453-1493d 1493-1501g 1554f",
      "39e 64-72e 88-103d 104-111g 206g 250h 563-569g 583f 602-617f 625g 670f 684-690f 701h 723-729g 737-751g 775g 783h 794h 808g 818g 834-840i 870g 893f 902-911d 946g 969-991f 995-1002g 1006-1010e 1015-1021d 1045f 1061g 1091f 1112g 1157f 1189-1193h 1275f 1307g 1373f 1382f 1402g 1502f 1542e 1556g 1562h",
      "24e 38g 44-51h 109f 131f 139-144h 208-219d 233d 247-257f 482-488h 512g 533-538g 577g 591f 606g 646g 671f 692g 754f 760h 768-778d 783g 851-856g 865-871i 883f 890g 1022-1028i 1038f 1044-1050h 1055-1062e 1068f 1105e 1201-1207g 1212-1220f 1233g 1260-1267e 1376-1387d 1391-1396g 1462-1473d 1482e",
    ],
  },
  {
    n: "X_tropicalis", c: "#1c1c70", y: 988.3, lines: ["978-1022 1055-1064 1138-1146 1456-1568", "0-106 565-920 970-1024 1046-1050 1157-1193 1522-1536", "5-24 250-279 484-520 593-648 692-719 870-1060 1105-1124 1312-1352"],
    blocks: [
      "501-510g 742h 749-771d 844f 855-864d 866-887d 888f 897g 974-983e 988g 1006g 1019g 1055-1061f 1064-1102f 1106-1112g 1117-1138f 1144e 1157f 1226f 1421f 1454-1461f 1470-1476g 1497-1502g",
      "62h 79g 87f 94g 103-109e 290g 304h 320f 335g 350-355f 413-424g 563-568h 587g 604g 611-617h 672g 685-694d 701g 724g 740h 783g 794g 804g 818g 834-840h 870g 918f 929-936g 944-971d 975-991e 994-1008f 1012g 1020g 1045f 1107-1116g 1121f 1156-1164d 1188-1193h 1286f 1307g 1372-1380e 1399g 1522g 1537-1558f 1561-1568d",
      "6f 21-42e 46f 54f 144f 159-165g 172d 207-223f 249-257f 277f 291-302d 482-489h 520-532g 539-549g 565-570h 582-588d 591f 645g 691g 718f 851-872f 891g 1046g 1057g 1105h 1121f 1201-1210e 1212-1222d 1230-1243e 1245d 1259f 1312e 1339g 1350f 1382g 1462-1472d",
    ],
  },
  {
    n: "Zebrafish", c: "#245a1e", y: 1005.7, lines: ["498-503 978-1014 1433-1568", "0-94 588-930 985-1000 1356-1380", "567-581 1213-1230"],
    blocks: [
      "501-510e 557-563g 750-756g 756-765e 770-777g 852-861d 864-890d 893e 978f 988f 1011g 1070e 1080-1092e 1096-1102e 1112-1132e 1433h 1457f 1469-1475g 1495-1502e",
      "88-97d 98-106e 290g 304h 334g 350-355f 413-424g 586f 611-617g 683-689f 724g 740h 783g 804g 818g 834-840h 870g 924-936g 944-953d 956-962d 975-991d 994-1010e 1307e 1356g 1372-1380f 1454g 1537-1545e",
      "21-29e 164e 202g 208-219e 228e 521-530g 565-569h 578g 851e 1056-1062f 1212-1220g 1228-1242e 1248-1255f 1382g",
    ],
  },
];

function Multiz() {
  return (
    <>
      {SPECIES.map((sp) => (
        <g key={sp.n}>
          {spans(sp.lines).map((s, i) => (
            <g key={i} fill="#747474">
              <rect x={s.x} y={sp.y + 4.6} width={s.w} height={1.2} />
              <rect x={s.x} y={sp.y + 10.2} width={s.w} height={1.2} />
            </g>
          ))}
          {spans(sp.blocks, 1.6).map((s, i) => (
            <rect key={"b" + i} x={s.x} y={sp.y} width={s.w} height={15.8} fill={SHADES[s.k] || "#676767"} />
          ))}
        </g>
      ))}
      {spans(["699-724 798-814 885-889 1063-1075 1165-1168 1181-1189 1372-1376", "303-307 547-551 631-644", ""]).map((s, i) => (
        <rect key={i} x={s.x} y={909.2} width={s.w} height={1.1} fill="#444" />
      ))}
    </>
  );
}

/* ---------- Header ---------- */

function Group({ items }: { items: [string, number][] }) {
  return (
    <div className="flex h-[22.5px] overflow-hidden rounded-[3px] border border-[#9c9c9c] bg-[#ebebeb]">
      {items.map(([t, w], i) => (
        <button key={t} className={(i ? "border-l border-[#b4b4b4] " : "") + "flex items-center justify-center pt-px font-['Inter','Liberation_Sans',sans-serif] text-[12.3px] tracking-[-0.2px] text-[#222]"} style={{ width: w }}>
          {t}
        </button>
      ))}
    </div>
  );
}

const ix = (n: number, v: number) => (n === 1 ? 180 + v / 2.24 : 880 + v / 2.178);
const L = "#dedede";
const BANDS: [number, number, string, string?, number?, number?][] = [
  [ix(1, 339), ix(1, 387), L], [ix(1, 387), ix(1, 415), "#868686"], [ix(1, 415), ix(1, 465), L], [ix(1, 465), ix(1, 577), "#000", "7p21.3", ix(1, 471), ix(1, 571)], [ix(1, 577), ix(1, 628), L],
  [ix(1, 628), ix(1, 701), "#000", "21.1", ix(1, 632), ix(1, 696)], [ix(1, 701), ix(1, 781), L, "15.3", ix(1, 711), ix(1, 774)], [ix(1, 781), ix(1, 825), "#4c4c4c"], [ix(1, 825), ix(1, 840), L],
  [ix(1, 840), ix(1, 945), "#303030", "7p14.3", ix(1, 843), ix(1, 943)], [ix(1, 945), ix(1, 985), L], [ix(1, 985), ix(1, 1093), "#303030", "7p14.1", ix(1, 988), ix(1, 1089)], [ix(1, 1093), ix(1, 1129), L, "13", ix(1, 1095), ix(1, 1128)],
  [ix(1, 1129), ix(1, 1191), "#303030"], [ix(1, 1191), ix(1, 1216), L], [ix(1, 1216), ix(1, 1276), "#303030"], [ix(1, 1276), ix(1, 1351), L, "11.2", ix(1, 1284), ix(1, 1345)],
  [ix(1, 1420), ix(1, 1514), L, "11.21", ix(1, 1427), ix(1, 1505)], [ix(1, 1514), ix(2, 34), "#4c4c4c", "11.22", ix(1, 1516), ix(2, 32)], [ix(2, 34), ix(2, 124), L, "11.23", ix(2, 40), ix(2, 119)],
  [ix(2, 124), ix(2, 271), "#000", "7q21.11", ix(2, 138), ix(2, 252)], [ix(2, 271), ix(2, 302), L], [ix(2, 302), ix(2, 352), "#303030"], [ix(2, 352), ix(2, 385), L], [ix(2, 385), ix(2, 470), "#303030", "q21.3", ix(2, 387), ix(2, 468)],
  [ix(2, 470), ix(2, 567), L, "7q22.1", ix(2, 471), ix(2, 566)], [ix(2, 567), ix(2, 580), "#4c4c4c"], [ix(2, 580), ix(2, 630), L], [ix(2, 630), ix(2, 750), "#303030", "7q31.1", ix(2, 640), ix(2, 737)],
  [ix(2, 750), ix(2, 797), L], [ix(2, 797), ix(2, 860), "#303030"], [ix(2, 860), ix(2, 906), L], [ix(2, 906), ix(2, 963), "#303030"], [ix(2, 963), ix(2, 998), L], [ix(2, 998), ix(2, 1017), "#868686"], [ix(2, 1017), ix(2, 1054), L],
  [ix(2, 1054), ix(2, 1148), "#4c4c4c", "7q33", ix(2, 1066), ix(2, 1136)], [ix(2, 1148), ix(2, 1231), L, "7q34", ix(2, 1153), ix(2, 1223)], [ix(2, 1231), ix(2, 1313), "#303030", "7q35", ix(2, 1236), ix(2, 1306)],
  [ix(2, 1313), ix(2, 1391), L, "36.1", ix(2, 1321), ix(2, 1384)], [ix(2, 1391), ix(2, 1432), "#868686"], [ix(2, 1432), ix(2, 1503), L, "36.3", ix(2, 1433), ix(2, 1497)],
];

function Ideogram() {
  return (
    <div className="ml-[200px] h-[33px] w-[1375px] rounded-[2px] border border-black bg-white">
      <svg className="block" width={1373} height={31} viewBox="201 96 1373 31">
        <T x={203.2} e={323.8} y={116.7}>chr7 (q36.2-q36.3)</T>
        {BANDS.map(([a, b, c], i) => (
          <rect key={i} x={a} y={102.5} width={b - a + 0.1} height={18.5} fill={c} />
        ))}
        <path d={`M${ix(1, 1351)} 102L798 111.7L${ix(1, 1351)} 121.3ZM${ix(1, 1420)} 102L798 111.7L${ix(1, 1420)} 121.3Z`} fill="#823030" />
        <path d={`M${ix(1, 1351)} 102.3H331.7V121.2H${ix(1, 1351)}M${ix(1, 1420)} 102.3H1570V121.2H${ix(1, 1420)}`} fill="none" stroke="#333" strokeWidth={1.2} />
        {BANDS.map(([, , c, t, x, e]) => t && <T key={t} x={x!} e={e!} y={116.8} c={c === L ? "#222" : "#d8d8d8"}>{t}</T>)}
        <rect x={1537.8} y={99.3} width={10} height={24.4} fill="none" stroke="#f02c20" strokeWidth={2} />
      </svg>
    </div>
  );
}

/* ---------- Page ---------- */

const TICKS = [280.2, 396.4, 511.6, 626.3, 741.4, 856.5, 971.6, 1086.6, 1201.4, 1316.3, 1431.4, 1546.4, 1661.3];
const TICK_LABELS = ["", "155,300,000", "155,400,000", "155,500,000", "155,600,000", "155,700,000", "155,800,000", "155,900,000", "156,000,000", "156,100,000", "156,200,000", "156,300,000", "156,400,000"];
const GENE_LABELS = ["RN7SKP280", "ENSG00000217825", "ENSG00000287865", "ENSG00000228521", "ENSG00000278998", "ENSG00000290007", "ENSG00000289248"];
const DG = "#245a1e";

export default function App() {
  return (
    <div className="h-[1104px] w-[1778px] overflow-hidden bg-[linear-gradient(to_bottom,#f8f8f6_0%,#f8f8f6_38%,#ececec_64%,#cbcdd9_94%,#cdd3d5_99%)] font-['Liberation_Sans',Arial,sans-serif] text-black">
      <header className="flex h-[95px] w-[1774px] flex-col items-center">
        <h1 className="h-[27px] pt-[3px] text-[19.6px] leading-[22px] font-bold tracking-[0.62px] whitespace-nowrap">UCSC Genome Browser on Human (GRCh38/hg38)</h1>
        <div className="flex h-[29px] w-full items-start pl-[518.5px] text-[18px] leading-[20px] whitespace-nowrap">
          <span className="w-[50.5px]">Move</span>
          <Group items={[["<<<", 38.8], ["<<", 34.4], ["<", 30.8], [">", 31.2], [">>", 34.8], [">>>", 38.8]]} />
          <span className="ml-[4.5px] w-[71.5px]">Zoom in</span>
          <Group items={[["1.5x", 37.8], ["3x", 38], ["10x", 35.8], ["Base", 43]]} />
          <span className="ml-[6px] w-[82.5px]">Zoom out</span>
          <Group items={[["1.5x", 37.8], ["3x", 37.6], ["10x", 36.3], ["100x", 42.6]]} />
        </div>
        <div className="flex h-[30px] w-full items-start pl-[387px] whitespace-nowrap">
          <button className="mt-[3px] h-6 w-[88px] rounded-[3px] border border-[#9c9c9c] bg-[#ebebeb] font-['Inter','Liberation_Sans',sans-serif] text-[12.3px] text-[#222]">Multi-region</button>
          <div className="ml-[5px] h-[29px] w-[236px] border border-[#c6c6c6] pl-[3px] text-[16.5px] leading-[27px]">chr7:155,139,050-156,473,349</div>
          <span className="ml-[5px] w-[118px] text-[18.2px] leading-[25px]">1,334,300 bp.</span>
          <div className="mt-[3px] h-6 w-[414px] border border-[#767676] bg-white pl-[3px] font-['Inter','Liberation_Sans',sans-serif] text-[12.45px] leading-[24px] text-[#666]">gene, chromosome range, search terms, help pages, see examples</div>
          <button className="mt-[3px] ml-[6px] h-6 w-[57px] rounded-[3px] border border-[#9c9c9c] bg-[#ebebeb] font-['Inter','Liberation_Sans',sans-serif] text-[12.3px] text-[#222]">Search</button>
          <a className="ml-[7px] text-[14.8px] leading-[28px] text-[#1c1c8c] underline">Examples</a>
        </div>
      </header>
      <Ideogram />
      <main className="mt-[11px] ml-7 h-[956px] w-[1719px] rounded-[4px] border border-black bg-white">
        <Track y={140} h={41} labels={[{ t: "Scale", y: 152 }, { t: "chr7:", y: 172 }]}>
          <T x={641.7} e={686.5} y={156.3}>500 kb</T>
          <rect x={690} y={142.7} width={1.1} height={17.4} fill="#222" />
          <rect x={690} y={150.2} width={576} height={1.1} fill="#222" />
          <rect x={1265} y={142.7} width={1.1} height={17.4} fill="#222" />
          <T x={1277} e={1308.6} y={156.3}>hg38</T>
          {TICKS.map((x, i) => (
            <g key={x}>
              <rect x={x - 0.5} y={162} width={1.1} height={17} fill="#222" />
              {i > 0 && <T x={x - 84} e={x - 3.6} y={177}>{TICK_LABELS[i]}</T>}
            </g>
          ))}
        </Track>
        <Track y={181} h={18}>
          <T x={798.6} e={1156} y={196.3} c="#9a8840">Reference Assembly Fix Patch Sequence Alignments</T>
        </Track>
        <Track y={199} h={17}>
          <T x={765.3} e={1189.4} y={213.2} c={NAVY}>Reference Assembly Alternate Haplotype Sequence Alignments</T>
        </Track>
        <Track y={216} h={201} green labels={GENE_LABELS.map((t, i) => ({ t, y: R[i], c: i === 4 ? "#ef4030" : "#34702e" }))}>
          <Gencode />
        </Track>
        <Track y={417} h={36} labels={[{ t: "RefSeq Curated", y: 443, c: "#28287c" }]}>
          <T x={893.9} e={1062.3} y={432}>RefSeq genes from NCBI</T>
          <Gene t={0} y={442.7} c={NAVY} low="883-888" />
          <Gene t={0} y={442.7} c={NAVY} line={[950, 1011]} tall="976 988-997 1006" low="949 970-978 1006-1012" />
          <Gene t={0} y={442.7} c={NAVY} line={[1153, 1188]} low="1152-1156 1158-1162 1164-1168 1172 1187" />
          <Gene t={0} y={442.7} c={NAVY} line={[1229, 1287]} low="1228 1268 1286" />
          <Gene t={0} y={442.7} c={NAVY} line={[1346, 1475]} tall="1456 1468" low="1345 1437 1453-1457 1470-1477" />
          <Gene t={1} y={442.7} c={NAVY} line={[70, 210]} tall="77 88 95 206" low="70-77 95-99 170 208" />
          <Gene t={1} y={442.7} c={NAVY} line={[495, 900]} tall="503 563 588 605 611 672 690 701 726 782 786 790 794 804 861 870 894" low="494 499 894-914" />
          <Gene t={1} y={442.7} c={NAVY} line={[970, 1008]} tall="973 978 990 1006" low="969-979 997" />
          <Gene t={1} y={442.7} c={NAVY} line={[1457, 1476]} low="1456-1460 1465-1477" />
          <Gene t={2} y={442.7} c={NAVY} line={[1376, 1399]} low="1375 1381 1387 1398 1480-1485" />
        </Track>
        <Track y={453} h={36} labels={[{ t: "OMIM Alleles", y: 478.7, c: DG }]}>
          <T x={867} e={1088.3} y={467.7} c="#285a20">OMIM Allelic Variant Phenotypes</T>
          {spans(["1466-1471", "976-983 989-993 1005-1008", ""]).map((s) => (
            <rect key={s.x} x={s.x} y={469.7} width={s.w} height={17} fill="#1c4a14" />
          ))}
        </Track>
        <Track y={489} h={36} labels={[{ t: "OMIM Genes", y: 514.5, c: DG }]}>
          <T x={765.7} e={1190} y={503} c="#285a20">OMIM Gene Phenotypes - Dark Green Can Be Disease-causing</T>
          {spans(["975-1011 1152-1186 1456-1477", "70-208 502-914 968-1008g", "1480-1485"]).map((s) => (
            <rect key={s.x} x={s.x} y={505.3} width={s.w} height={17.4} fill={s.k ? "#1a4410" : "#b4b4b4"} />
          ))}
        </Track>
        <Track y={525} h={196} labels={[{ t: "RN7SKP280", y: 554.6 }, { t: "AC099552.4", y: 577.6 }, { t: "AC099552.3", y: 602.6 }, { t: "RP11-1430O6.1", y: 626 }]}>
          <Gtex />
        </Track>
        <Track y={721} h={36} labels={[{ t: "ENCODE cCREs", y: 746.6 }]}>
          <T x={699.5} e={1256.3} y={735.5}>ENCODE Candidate Cis-Regulatory Elements (cCREs) combined from all cell types</T>
          <Ticks list={CCRES} y={737.6} h={17.2} colors={CCRE_COLORS} fallback="#f8c43a" />
        </Track>
        <Track y={757} h={53} labels={[{ t: "Layered H3K27Ac", y: 782.5, left: true }]}>
          <H3K27Ac />
        </Track>
        <Track
          y={810}
          h={214}
          labels={[
            { t: "4 _", y: 818.5, c: "#50508c" },
            { t: "Cons 100 Verts", y: 846.6, c: "#50508c", left: true },
            { t: "-0.5 _", y: 875.8, c: "#8c5050" },
            ...SPECIES.map((s) => ({ t: s.n, y: s.y + 8.7, c: s.c })),
          ]}
        >
          <T x={809} e={1146} y={823.8} c="#484890">100 vertebrates Basewise Conservation by PhyloP</T>
          <Conservation />
          <T x={854.9} e={1101} y={900} c="#1c1c60">Multiz Alignments of 100 Vertebrates</T>
          <Multiz />
        </Track>
        <Track y={1024} h={35} labels={[{ t: "Common dbSNP(155)", y: 1049 }]}>
          <T x={817.7} e={1137.3} y={1037.6}>Short Genetic Variants from dbSNP release 155</T>
          <rect x={210.5} y={1040} width={1535.5} height={17} fill="#000" />
          <Ticks list={SNPS} y={1040} h={17} colors={SNP_COLORS} fallback="#fff" />
        </Track>
        <Track y={1059} h={34} labels={[{ t: "RepeatMasker", y: 1084.8 }]}>
          <T x={850.3} e={1106.3} y={1073}>Repeating Elements by RepeatMasker</T>
          <rect x={210.5} y={1075.3} width={1535.5} height={17.2} fill="#000" />
          <Ticks list={GAPS} y={1075.3} h={17.2} colors={{ x: "#909090" }} fallback="#fff" />
        </Track>
      </main>
    </div>
  );
}
